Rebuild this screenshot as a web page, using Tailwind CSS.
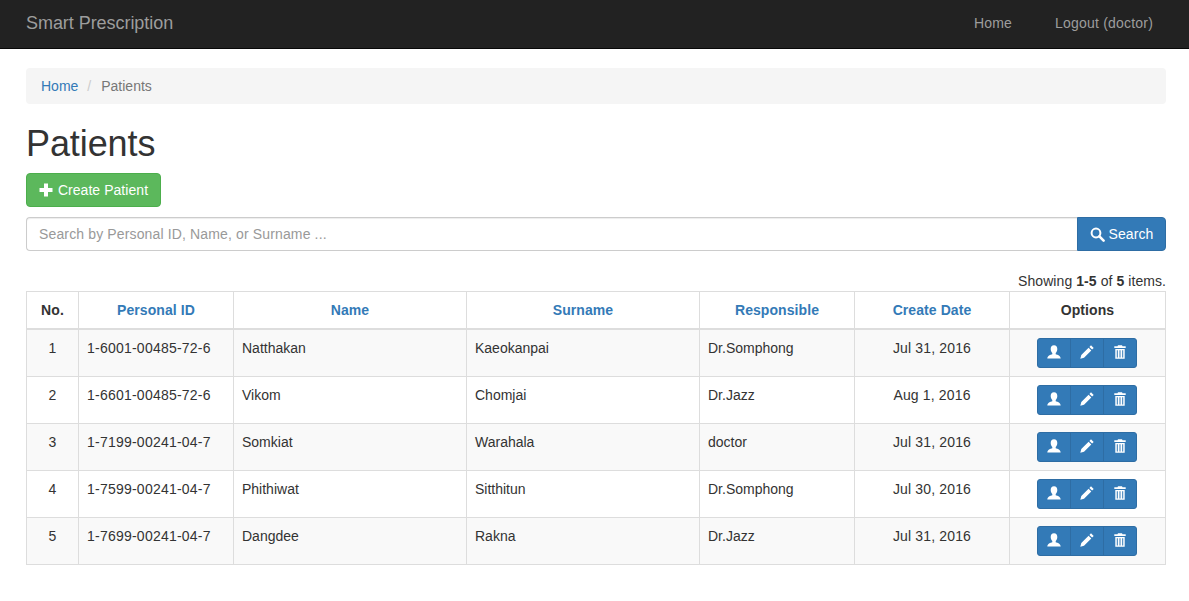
<!DOCTYPE html>
<html lang="en">

<head>
  <meta charset="utf-8" />
  <title>Patients</title>
  <script src="https://cdn.jsdelivr.net/npm/@tailwindcss/browser@4"></script>
</head>

<body class="bg-white font-['Liberation_Sans',Arial,sans-serif] text-sm leading-[20px] text-[#333]">
  <!-- navbar -->
  <nav class="flex h-[49px] items-center justify-between border-b border-[#080808] bg-[#222] pb-[2px] pl-[26px] pr-[36px] text-[#9d9d9d]">
    <a href="#" class="text-[18px] tracking-[-0.05px]">Smart Prescription</a>
    <div class="flex gap-[43px] tracking-[0.2px]">
      <a href="#">Home</a>
      <a href="#">Logout (doctor)</a>
    </div>
  </nav>

  <div class="pb-[36px] pl-[26px] pr-[23px] pt-[19px]">
    <!-- breadcrumb -->
    <div class="flex h-[36px] items-center rounded bg-[#f5f5f5] px-[15px]">
      <a href="#" class="text-[#337ab7]">Home</a>
      <span class="pl-[9px] pr-[10px] text-[#ccc]">/</span>
      <span class="text-[#777]">Patients</span>
    </div>

    <h1 class="mb-[9px] mt-[20px] text-[36px] font-normal leading-[40px] tracking-[-0.1px]">Patients</h1>

    <button class="flex h-[34px] w-[135px] items-center justify-center gap-[5px] rounded border border-[#4cae4c] bg-[#5cb85c] tracking-[0.05px] text-white">
      <svg class="h-[14px] w-[14px]" viewBox="0 0 14 14" fill="#fff"><path d="M5 0.5h4v4.5h4.5v4H9v4.5H5V9H0.5V5H5z" /></svg>
      Create Patient
    </button>

    <!-- search -->
    <div class="mt-[10px] flex h-[34px]">
      <div class="flex flex-1 items-center rounded-l border border-r-0 border-[#ccc] px-[12px] tracking-[0.14px] text-[#999] shadow-[inset_0_1px_1px_rgba(0,0,0,0.075)]">Search by Personal ID, Name, or Surname ...</div>
      <button class="flex w-[89px] items-center justify-center gap-[4px] rounded-r border border-[#2e6da4] bg-[#337ab7] tracking-[0.1px] text-white">
        <svg class="h-[15px] w-[15px]" viewBox="0 0 15 15" fill="none" stroke="#fff"><circle cx="6" cy="6" r="4.4" stroke-width="2" /><path d="M9.4 9.4l4.2 4.2" stroke-width="2.6" stroke-linecap="round" /></svg>
        Search
      </button>
    </div>

    <div class="mt-[20px] h-[20px] text-right tracking-[0.07px]">Showing <b>1-5</b> of <b>5</b> items.</div>

    <table class="w-[1140px] table-fixed border-collapse border border-[#ddd]">
      <colgroup>
        <col class="w-[52px]" />
        <col class="w-[155px]" />
        <col class="w-[233px]" />
        <col class="w-[233px]" />
        <col class="w-[155px]" />
        <col class="w-[155px]" />
        <col class="w-[156px]" />
      </colgroup>
      <thead>
        <tr class="h-[37px] text-center font-bold tracking-[0.08px]">
          <th class="border border-b-2 border-[#ddd] px-2 py-[7px]">No.</th>
          <th class="border border-b-2 border-[#ddd] px-2 py-[7px] text-[#337ab7]">Personal ID</th>
          <th class="border border-b-2 border-[#ddd] px-2 py-[7px] text-[#337ab7]">Name</th>
          <th class="border border-b-2 border-[#ddd] px-2 py-[7px] text-[#337ab7]">Surname</th>
          <th class="border border-b-2 border-[#ddd] px-2 py-[7px] text-[#337ab7]">Responsible</th>
          <th class="border border-b-2 border-[#ddd] px-2 py-[7px] text-[#337ab7]">Create Date</th>
          <th class="border border-b-2 border-[#ddd] px-2 py-[7px]">Options</th>
        </tr>
      </thead>
      <tbody>
        <tr class="bg-[#f9f9f9]">
          <td class="border border-[#ddd] p-2 text-center align-top">1</td>
          <td class="border border-[#ddd] p-2 align-top tracking-[0.23px]">1-6001-00485-72-6</td>
          <td class="border border-[#ddd] p-2 align-top">Natthakan</td>
          <td class="border border-[#ddd] p-2 align-top">Kaeokanpai</td>
          <td class="border border-[#ddd] p-2 align-top">Dr.Somphong</td>
          <td class="border border-[#ddd] p-2 text-center align-top tracking-[0.15px]">Jul 31, 2016</td>
          <td class="border border-[#ddd] py-2 pl-2 pr-[10px] align-top">
            <div class="mx-auto flex h-[30px] w-[100px] rounded-[3px] border border-[#2e6da4] bg-[#337ab7]">
              <span class="flex flex-1 items-center justify-center pb-[2px]"><svg class="h-[14px] w-[14px]" viewBox="0 0 14 14" fill="#fff"><path d="M7 0.2c2.200 0 3.300 1.600 3.300 3.700 0 1.600-.7 3.200-1.600 4v1.300c2 .6 4.700 1.200 5 4.300H0.300c.3-3.100 3-3.700 5-4.300V7.900C4.400 7.100 3.700 5.500 3.700 3.900 3.700 1.800 4.800 0.200 7 0.200z" /></svg></span>
              <span class="flex flex-1 items-center justify-center border-l border-[#2e6da4] pb-[2px]"><svg class="h-[14px] w-[14px]" viewBox="0 0 14 14" fill="#fff"><path d="M11 0.300l2.700 2.700-1.600 1.600-2.700-2.700zM8.600 2.700l2.700 2.700-7.300 7.300-3.700 1 1-3.700z" /></svg></span>
              <span class="flex flex-1 items-center justify-center border-l border-[#2e6da4] pb-[2px]"><svg class="h-[14px] w-[14px]" viewBox="0 0 14 14" fill="#fff" fill-rule="evenodd"><path d="M5 0.300h4l.5 1h3.200v1.700H1.300V1.300h3.200zM2.300 4h9.400v9.700H2.300zM3.800 5.200v7.300h1V5.200zm2.700 0v7.300h1V5.200zm2.700 0v7.300h1V5.200z" /></svg></span>
            </div>
          </td>
        </tr>
        <tr>
          <td class="border border-[#ddd] p-2 text-center align-top">2</td>
          <td class="border border-[#ddd] p-2 align-top tracking-[0.23px]">1-6601-00485-72-6</td>
          <td class="border border-[#ddd] p-2 align-top">Vikom</td>
          <td class="border border-[#ddd] p-2 align-top">Chomjai</td>
          <td class="border border-[#ddd] p-2 align-top">Dr.Jazz</td>
          <td class="border border-[#ddd] p-2 text-center align-top tracking-[0.15px]">Aug 1, 2016</td>
          <td class="border border-[#ddd] py-2 pl-2 pr-[10px] align-top">
            <div class="mx-auto flex h-[30px] w-[100px] rounded-[3px] border border-[#2e6da4] bg-[#337ab7]">
              <span class="flex flex-1 items-center justify-center pb-[2px]"><svg class="h-[14px] w-[14px]" viewBox="0 0 14 14" fill="#fff"><path d="M7 0.2c2.200 0 3.300 1.600 3.300 3.700 0 1.600-.7 3.200-1.600 4v1.300c2 .6 4.700 1.200 5 4.300H0.300c.3-3.100 3-3.700 5-4.300V7.900C4.400 7.100 3.700 5.500 3.700 3.900 3.700 1.800 4.800 0.200 7 0.200z" /></svg></span>
              <span class="flex flex-1 items-center justify-center border-l border-[#2e6da4] pb-[2px]"><svg class="h-[14px] w-[14px]" viewBox="0 0 14 14" fill="#fff"><path d="M11 0.300l2.700 2.700-1.600 1.600-2.700-2.700zM8.600 2.700l2.700 2.700-7.300 7.300-3.700 1 1-3.700z" /></svg></span>
              <span class="flex flex-1 items-center justify-center border-l border-[#2e6da4] pb-[2px]"><svg class="h-[14px] w-[14px]" viewBox="0 0 14 14" fill="#fff" fill-rule="evenodd"><path d="M5 0.300h4l.5 1h3.200v1.700H1.300V1.300h3.200zM2.300 4h9.400v9.700H2.300zM3.800 5.200v7.300h1V5.200zm2.700 0v7.300h1V5.200zm2.700 0v7.300h1V5.200z" /></svg></span>
            </div>
          </td>
        </tr>
        <tr class="bg-[#f9f9f9]">
          <td class="border border-[#ddd] p-2 text-center align-top">3</td>
          <td class="border border-[#ddd] p-2 align-top tracking-[0.23px]">1-7199-00241-04-7</td>
          <td class="border border-[#ddd] p-2 align-top">Somkiat</td>
          <td class="border border-[#ddd] p-2 align-top">Warahala</td>
          <td class="border border-[#ddd] p-2 align-top">doctor</td>
          <td class="border border-[#ddd] p-2 text-center align-top tracking-[0.15px]">Jul 31, 2016</td>
          <td class="border border-[#ddd] py-2 pl-2 pr-[10px] align-top">
            <div class="mx-auto flex h-[30px] w-[100px] rounded-[3px] border border-[#2e6da4] bg-[#337ab7]">
              <span class="flex flex-1 items-center justify-center pb-[2px]"><svg class="h-[14px] w-[14px]" viewBox="0 0 14 14" fill="#fff"><path d="M7 0.2c2.200 0 3.300 1.600 3.300 3.700 0 1.600-.7 3.200-1.600 4v1.300c2 .6 4.700 1.200 5 4.300H0.300c.3-3.100 3-3.700 5-4.300V7.900C4.400 7.100 3.700 5.500 3.700 3.900 3.700 1.800 4.800 0.200 7 0.200z" /></svg></span>
              <span class="flex flex-1 items-center justify-center border-l border-[#2e6da4] pb-[2px]"><svg class="h-[14px] w-[14px]" viewBox="0 0 14 14" fill="#fff"><path d="M11 0.300l2.700 2.700-1.600 1.600-2.700-2.700zM8.600 2.700l2.700 2.700-7.300 7.300-3.700 1 1-3.700z" /></svg></span>
              <span class="flex flex-1 items-center justify-center border-l border-[#2e6da4] pb-[2px]"><svg class="h-[14px] w-[14px]" viewBox="0 0 14 14" fill="#fff" fill-rule="evenodd"><path d="M5 0.300h4l.5 1h3.200v1.700H1.300V1.300h3.200zM2.300 4h9.400v9.700H2.300zM3.800 5.200v7.300h1V5.200zm2.700 0v7.300h1V5.200zm2.700 0v7.300h1V5.200z" /></svg></span>
            </div>
          </td>
        </tr>
        <tr>
          <td class="border border-[#ddd] p-2 text-center align-top">4</td>
          <td class="border border-[#ddd] p-2 align-top tracking-[0.23px]">1-7599-00241-04-7</td>
          <td class="border border-[#ddd] p-2 align-top">Phithiwat</td>
          <td class="border border-[#ddd] p-2 align-top">Sitthitun</td>
          <td class="border border-[#ddd] p-2 align-top">Dr.Somphong</td>
          <td class="border border-[#ddd] p-2 text-center align-top tracking-[0.15px]">Jul 30, 2016</td>
          <td class="border border-[#ddd] py-2 pl-2 pr-[10px] align-top">
            <div class="mx-auto flex h-[30px] w-[100px] rounded-[3px] border border-[#2e6da4] bg-[#337ab7]">
              <span class="flex flex-1 items-center justify-center pb-[2px]"><svg class="h-[14px] w-[14px]" viewBox="0 0 14 14" fill="#fff"><path d="M7 0.2c2.200 0 3.300 1.600 3.300 3.700 0 1.600-.7 3.200-1.600 4v1.300c2 .6 4.700 1.200 5 4.300H0.300c.3-3.100 3-3.700 5-4.300V7.900C4.400 7.100 3.700 5.500 3.700 3.900 3.700 1.800 4.800 0.200 7 0.200z" /></svg></span>
              <span class="flex flex-1 items-center justify-center border-l border-[#2e6da4] pb-[2px]"><svg class="h-[14px] w-[14px]" viewBox="0 0 14 14" fill="#fff"><path d="M11 0.300l2.700 2.700-1.600 1.600-2.700-2.700zM8.600 2.700l2.700 2.700-7.300 7.300-3.700 1 1-3.700z" /></svg></span>
              <span class="flex flex-1 items-center justify-center border-l border-[#2e6da4] pb-[2px]"><svg class="h-[14px] w-[14px]" viewBox="0 0 14 14" fill="#fff" fill-rule="evenodd"><path d="M5 0.300h4l.5 1h3.200v1.700H1.300V1.300h3.200zM2.300 4h9.400v9.700H2.300zM3.800 5.200v7.300h1V5.200zm2.700 0v7.300h1V5.200zm2.700 0v7.300h1V5.200z" /></svg></span>
            </div>
          </td>
        </tr>
        <tr class="bg-[#f9f9f9]">
          <td class="border border-[#ddd] p-2 text-center align-top">5</td>
          <td class="border border-[#ddd] p-2 align-top tracking-[0.23px]">1-7699-00241-04-7</td>
          <td class="border border-[#ddd] p-2 align-top">Dangdee</td>
          <td class="border border-[#ddd] p-2 align-top">Rakna</td>
          <td class="border border-[#ddd] p-2 align-top">Dr.Jazz</td>
          <td class="border border-[#ddd] p-2 text-center align-top tracking-[0.15px]">Jul 31, 2016</td>
          <td class="border border-[#ddd] py-2 pl-2 pr-[10px] align-top">
            <div class="mx-auto flex h-[30px] w-[100px] rounded-[3px] border border-[#2e6da4] bg-[#337ab7]">
              <span class="flex flex-1 items-center justify-center pb-[2px]"><svg class="h-[14px] w-[14px]" viewBox="0 0 14 14" fill="#fff"><path d="M7 0.2c2.200 0 3.300 1.600 3.300 3.700 0 1.600-.7 3.200-1.600 4v1.300c2 .6 4.700 1.200 5 4.300H0.300c.3-3.100 3-3.700 5-4.300V7.900C4.400 7.100 3.700 5.500 3.700 3.900 3.700 1.800 4.800 0.200 7 0.200z" /></svg></span>
              <span class="flex flex-1 items-center justify-center border-l border-[#2e6da4] pb-[2px]"><svg class="h-[14px] w-[14px]" viewBox="0 0 14 14" fill="#fff"><path d="M11 0.300l2.700 2.700-1.600 1.600-2.700-2.700zM8.600 2.700l2.700 2.700-7.300 7.300-3.700 1 1-3.700z" /></svg></span>
              <span class="flex flex-1 items-center justify-center border-l border-[#2e6da4] pb-[2px]"><svg class="h-[14px] w-[14px]" viewBox="0 0 14 14" fill="#fff" fill-rule="evenodd"><path d="M5 0.300h4l.5 1h3.200v1.700H1.300V1.300h3.200zM2.300 4h9.400v9.700H2.300zM3.800 5.200v7.300h1V5.200zm2.700 0v7.300h1V5.200zm2.700 0v7.300h1V5.200z" /></svg></span>
            </div>
          </td>
        </tr>
      </tbody>
    </table>
  </div>
</body>

</html>
